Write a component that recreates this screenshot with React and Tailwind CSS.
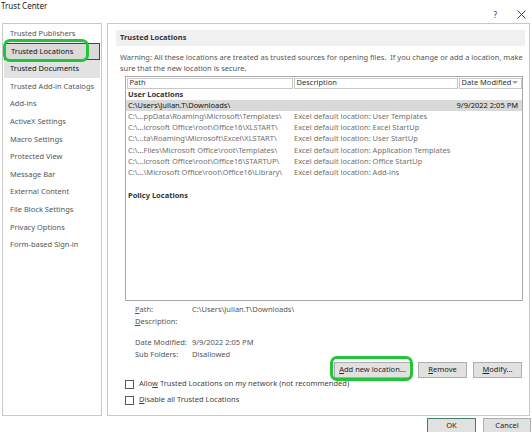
import { useState } from 'react';

const navItems = [
  'Trusted Publishers',
  'Trusted Locations',
  'Trusted Documents',
  'Trusted Add-in Catalogs',
  'Add-ins',
  'ActiveX Settings',
  'Macro Settings',
  'Protected View',
  'Message Bar',
  'External Content',
  'File Block Settings',
  'Privacy Options',
  'Form-based Sign-in'
];

const locations = [
  ['C:\\...ppData\\Roaming\\Microsoft\\Templates\\', 'Excel default location: User Templates'],
  ['C:\\...icrosoft Office\\root\\Office16\\XLSTART\\', 'Excel default location: Excel StartUp'],
  ['C:\\...ta\\Roaming\\Microsoft\\Excel\\XLSTART\\', 'Excel default location: User StartUp'],
  ['C:\\...Files\\Microsoft Office\\root\\Templates\\', 'Excel default location: Application Templates'],
  ['C:\\...icrosoft Office\\root\\Office16\\STARTUP\\', 'Excel default location: Office StartUp'],
  ['C:\\...\\Microsoft Office\\root\\Office16\\Library\\', 'Excel default location: Add-ins']
];

function Checkbox({ children }) {
  return (
    <div className="flex items-center h-[16px] ml-[17px]">
      <span className="w-[9px] h-[9px] border border-[#555] bg-white mr-[5px]" />
      <span className="text-[#444]">{children}</span>
    </div>
  );
}

function Button({ children, className = '' }) {
  return (
    <button className={`h-[16px] bg-[#e1e1e1] border border-[#adadad] text-[#222] flex items-center justify-center ${className}`}>
      {children}
    </button>
  );
}

export default function App() {
  const [selected, setSelected] = useState('Trusted Locations');

  return (
    <div className="w-[532px] h-[432px] bg-white overflow-hidden font-['Noto_Sans','Open_Sans',sans-serif] text-[7.5px] text-[#333] leading-none">
      {/* title bar */}
      <div className="h-[23px] flex justify-between items-start">
        <span className="pt-[2px] pl-[1px] text-[8px] text-[#222]">Trust Center</span>
        <div className="flex items-center gap-[20px] pt-[10px] pr-[6px] text-[#333]">
          <span className="text-[8px]">?</span>
          <svg width="9" height="9" viewBox="0 0 9 9" className="text-[#333]">
            <path d="M0.5 0.5L8.5 8.5M8.5 0.5L0.5 8.5" stroke="currentColor" strokeWidth="0.9" />
          </svg>
        </div>
      </div>

      <div className="flex h-[393px] pl-[2px]">
        {/* left nav */}
        <div className="relative w-[100px] border border-[#c8c8c8] pt-[1px] px-[1px]">
          {navItems.map((item) => {
            const isSel = item === selected;
            const isHover = item === 'Trusted Documents';
            return (
              <div
                key={item}
                onClick={() => setSelected(item)}
                className={`h-[17.6px] flex items-center pl-[6px] ${isSel ? 'bg-[#dadada] border border-[#444] text-[#111]' : isHover ? 'bg-[#e2e2e2] text-[#111]' : 'text-[#555]'}`}
              >
                {item}
              </div>
            );
          })}
          <div className="absolute left-[0px] top-[15px] w-[86px] h-[23px] rounded-[7px] border-[3px] border-[#22c43a]" />
        </div>

        {/* right content */}
        <div className="ml-[5px] w-[423px] border border-[#c8c8c8] flex flex-col">
          <div className="mt-[6px] ml-[8px] mr-[4px] h-[16px] bg-[#f0f0f0] flex items-center pl-[4px] font-bold text-[#333]">
            Trusted Locations
          </div>
          <div className="mt-[6px] pl-[12px] pr-[4px] text-[#555] leading-[11px]">
            <div>Warning: All these locations are treated as trusted sources for opening files.&nbsp; If you change or add a location, make</div>
            <div>sure that the new location is secure.</div>
          </div>

          {/* table */}
          <div className="mt-[2px] ml-[17px] w-[398px] h-[225px] border border-[#a8a8a8] flex flex-col">
            <div className="flex h-[12px] gap-[1px] p-[0.5px]">
              <div className="w-[166px] border border-[#c8c8c8] flex items-center pl-[2px] text-[#333]">Path</div>
              <div className="w-[164px] border border-[#c8c8c8] flex items-center pl-[2px] text-[#333]">Description</div>
              <div className="flex-1 border border-[#c8c8c8] flex items-center justify-between pl-[2px] pr-[3px] text-[#333]">
                <span>Date Modified</span>
                <svg width="6" height="4" viewBox="0 0 6 4"><path d="M0 0H6L3 3Z" fill="#a0a0a0" /></svg>
              </div>
            </div>
            <div className="h-[10.5px] flex items-center pl-[2px] font-bold text-[#333]">User Locations</div>
            <div className="h-[11.5px] flex items-center bg-[#d9d9d9] pl-[2px] pr-[4px] text-[#111]">
              <span className="w-[166px]">C:\Users\Julian.T\Downloads\</span>
              <span className="flex-1" />
              <span>9/9/2022 2:05 PM</span>
            </div>
            {locations.map(([p, d]) => (
              <div key={p} className="h-[11.25px] flex items-center pl-[2px] text-[#707070]">
                <span className="w-[166px] shrink-0 whitespace-nowrap">{p}</span>
                <span className="whitespace-nowrap">{d}</span>
              </div>
            ))}
            <div className="mt-[12px] h-[11px] flex items-center pl-[2px] font-bold text-[#333]">Policy Locations</div>
          </div>

          {/* details */}
          <div className="mt-[3px] ml-[27px] text-[#555]">
            <div className="flex h-[12px] items-center">
              <span className="w-[57px]"><u>P</u>ath:</span>
              <span>C:\Users\Julian.T\Downloads\</span>
            </div>
            <div className="flex h-[12px] items-center">
              <span className="w-[57px]"><u>D</u>escription:</span>
            </div>
            <div className="flex h-[12px] items-center mt-[9px]">
              <span className="w-[57px]">Date Modified:</span>
              <span>9/9/2022 2:05 PM</span>
            </div>
            <div className="flex h-[12px] items-center">
              <span className="w-[57px]">Sub Folders:</span>
              <span>Disallowed</span>
            </div>
          </div>

          <div className="flex justify-end mr-[7px] mt-[1px]">
            <div className="relative">
              <Button className="w-[77px]"><span><u>A</u>dd new location...</span></Button>
              <div className="absolute -left-[4px] -top-[6px] w-[83px] h-[25px] rounded-[7px] border-[3px] border-[#22c43a]" />
            </div>
            <Button className="w-[49px] ml-[7px]"><span><u>R</u>emove</span></Button>
            <Button className="w-[49px] ml-[6px]"><span><u>M</u>odify...</span></Button>
          </div>

          <div className="-mt-[2px]">
            <Checkbox>Allo<u>w</u> Trusted Locations on my network (not recommended)</Checkbox>
            <Checkbox><u>D</u>isable all Trusted Locations</Checkbox>
          </div>
        </div>
      </div>

      {/* footer */}
      <div className="flex justify-end gap-[7px] pt-[2px] pr-[1px]">
        <Button className="w-[49px] !border-[#3f7f6c]">OK</Button>
        <Button className="w-[48px]">Cancel</Button>
      </div>
    </div>
  );
}
